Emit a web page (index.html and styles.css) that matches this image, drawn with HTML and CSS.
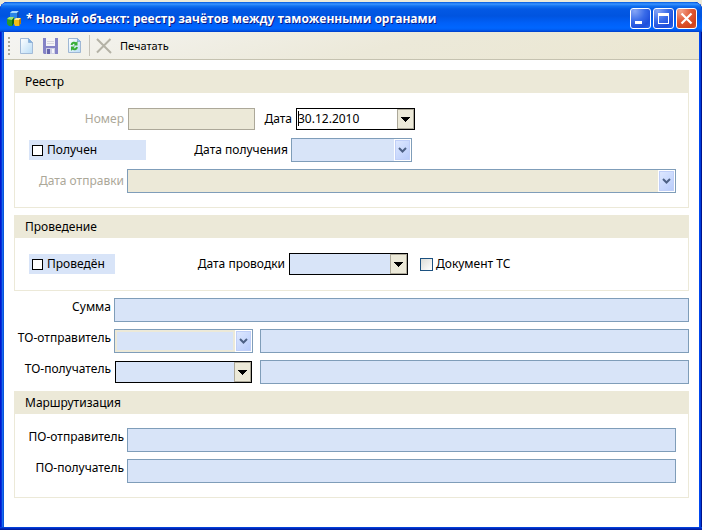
FILE: index.html
```html
<!DOCTYPE html>
<html lang="ru">
<head>
<meta charset="utf-8">
<meta name="viewport" content="width=device-width, initial-scale=1">
<title>Новый объект: реестр зачётов между таможенными органами</title>
<link rel="stylesheet" href="styles.css">
</head>
<body>
<svg class="defs" aria-hidden="true">
  <defs>
    <linearGradient id="page" x1="0" y1="0" x2="1" y2="1"><stop offset="0" stop-color="#fff"/><stop offset="1" stop-color="#b9dcf6"/></linearGradient>
    <symbol id="chevron" viewBox="0 0 9 6"><path d="M1 1 L4.500 4.500 L8 1" fill="none" stroke="#4d6185" stroke-width="2"/></symbol>
    <symbol id="triangle" viewBox="0 0 9 5"><path d="M0 0H9V1H8V2H7V3H6V4H5V5H4V4H3V3H2V2H1V1H0Z" fill="#000"/></symbol>
  </defs>
</svg>
<div class="window">
  <header class="titlebar">
    <svg class="app-icon" viewBox="0 0 15 16" aria-hidden="true">
      <path d="M3 2 L5 0H12V6L10 8H3Z" fill="#2b86e6"/><path d="M3 2 L5 0H12L10 2Z" fill="#a5d8fb"/><path d="M10 2L12 0V6L10 8Z" fill="#1550ae"/>
      <path d="M0 8 L2 6H7V12L5 15H2L0 13Z" fill="#2c9b25"/><path d="M0 8 L2 6H7L5 9Z" fill="#9be477"/><path d="M5 9L7 7V12L5 15Z" fill="#11651a"/>
      <path d="M7 9 L9 7H14V12L12 15H8L7 13Z" fill="#f3bd18"/><path d="M7 9 L9 7H14L12 9Z" fill="#fff093"/><path d="M12 9L14 7V12L12 15Z" fill="#b57a0a"/>
    </svg>
    <h1 class="title">* Новый объект: реестр зачётов между таможенными органами</h1>
    <button class="win-btn" type="button" aria-label="Свернуть"><svg viewBox="0 0 19 19"><rect x="4" y="12" width="7" height="3" fill="#fff"/></svg></button>
    <button class="win-btn" type="button" aria-label="Развернуть"><svg viewBox="0 0 19 19"><path d="M4 4H15V15H4ZM5 7V14H14V7Z" fill="#fff" fill-rule="evenodd"/></svg></button>
    <button class="win-btn close" type="button" aria-label="Закрыть"><svg viewBox="0 0 19 19"><path d="M4.500 4.500L14.500 14.500M14.500 4.500L4.500 14.500" stroke="#fff" stroke-width="2.200"/></svg></button>
  </header>
  <div class="toolbar">
    <span class="grip"></span>
    <button class="tool" type="button" aria-label="Создать"><svg viewBox="0 0 16 16"><path d="M2.500 .5H10.500L14.500 4.500V15.500H2.500Z" fill="url(#page)" stroke="#a3bbd8"/><path d="M10.500 .5V4.500H14.500Z" fill="#7fb2e3" stroke="#92b3d8"/></svg></button>
    <button class="tool" type="button" aria-label="Сохранить"><svg viewBox="0 0 16 16"><path d="M1 0H16V16H2L1 15Z" fill="#8583c6"/><rect x="4" y="0" width="9" height="8" fill="#f5f4f6"/><path d="M5 3.500H12M5 5.500H12" stroke="#d7d6de"/><rect x="4" y="10" width="9" height="6" fill="#cfd0e6"/><rect x="5" y="11" width="3" height="5" fill="#6666ad"/><rect x="10" y="11" width="2" height="4" fill="#f5f5fa"/></svg></button>
    <button class="tool" type="button" aria-label="Обновить"><svg viewBox="0 0 16 16"><path d="M2.500 .5H11.500L14.500 3.500V14.500H2.500Z" fill="url(#page)" stroke="#9fb7d4"/><path d="M11.500 .5V3.500H14.500Z" fill="#9bc2e8" stroke="#92b3d8"/><path d="M5.500 7C6 4.500 8.500 4 10 5.500M11 9C10.500 11.500 8 12 6.500 10.500" fill="none" stroke="#35ad35" stroke-width="2"/><path d="M11.500 3V7.500H7.500ZM5 13V8.500H9Z" fill="#35ad35"/></svg></button>
    <span class="separator"></span>
    <button class="tool" type="button" aria-label="Удалить" disabled><svg viewBox="0 0 16 16"><path d="M1 1L15 15M14.500 1L1 14.500" stroke="#b4b2a6" stroke-width="2"/></svg></button>
    <button class="tool-text" type="button">Печатать</button>
  </div>
  <main class="content">
    <section class="group">
      <h2 class="group-title">Реестр</h2>
      <div class="group-body">
        <div class="row">
          <label class="label disabled" for="number">Номер</label>
          <input class="field number" id="number" type="text" disabled>
          <label class="side-label near" for="date">Дата</label>
          <div class="combo date flat white">
            <input class="combo-value caret" id="date" type="text" value="30.12.2010">
            <button class="combo-btn" type="button" aria-label="Открыть календарь"><svg><use href="#triangle"/></svg></button>
          </div>
        </div>
        <div class="row">
          <label class="check received"><input type="checkbox">Получен</label>
          <label class="side-label received-label" for="received-date">Дата получения</label>
          <div class="combo date">
            <input class="combo-value" id="received-date" type="text">
            <button class="combo-btn" type="button" aria-label="Открыть календарь"><svg><use href="#chevron"/></svg></button>
          </div>
        </div>
        <div class="row">
          <label class="label disabled" for="sent-date">Дата отправки</label>
          <div class="combo grow off">
            <input class="combo-value" id="sent-date" type="text" disabled>
            <button class="combo-btn" type="button" aria-label="Открыть календарь"><svg><use href="#chevron"/></svg></button>
          </div>
        </div>
      </div>
    </section>
    <section class="group">
      <h2 class="group-title">Проведение</h2>
      <div class="group-body">
        <div class="row">
          <label class="check posted"><input type="checkbox">Проведён</label>
          <label class="side-label posted-label" for="posted-date">Дата проводки</label>
          <div class="combo date flat">
            <input class="combo-value" id="posted-date" type="text">
            <button class="combo-btn" type="button" aria-label="Открыть календарь"><svg><use href="#triangle"/></svg></button>
          </div>
          <label class="check plain"><input type="checkbox">Документ ТС</label>
        </div>
      </div>
    </section>
    <div class="row">
      <label class="label raised" for="sum">Сумма</label>
      <input class="field grow" id="sum" type="text">
    </div>
    <div class="row">
      <label class="label raised" for="to-sender">ТО-отправитель</label>
      <div class="combo office framed">
        <select class="combo-value" id="to-sender"><option></option></select>
        <span class="combo-btn"><svg><use href="#chevron"/></svg></span>
      </div>
      <input class="field grow name" type="text" aria-label="Наименование ТО-отправителя">
    </div>
    <div class="row">
      <label class="label raised" for="to-receiver">ТО-получатель</label>
      <div class="combo office flat">
        <select class="combo-value" id="to-receiver"><option></option></select>
        <span class="combo-btn"><svg><use href="#triangle"/></svg></span>
      </div>
      <input class="field grow name" type="text" aria-label="Наименование ТО-получателя">
    </div>
    <section class="group">
      <h2 class="group-title">Маршрутизация</h2>
      <div class="group-body">
        <div class="row">
          <label class="label raised" for="po-sender">ПО-отправитель</label>
          <input class="field grow" id="po-sender" type="text">
        </div>
        <div class="row">
          <label class="label raised" for="po-receiver">ПО-получатель</label>
          <input class="field grow" id="po-receiver" type="text">
        </div>
      </div>
    </section>
  </main>
</div>
</body>
</html>
```
FILE: styles.css
```css
:root {
  --beige: #ece9d8;
  --fill: #d8e4f8;
  --line: #7f9db9;
}

* {
  box-sizing: border-box;
}

body {
  margin: 0;
  padding-top: 2px;
  background: var(--beige);
  color: #000;
  font: 12px/18px "Noto Sans", "Open Sans", sans-serif;
}

button,
input,
select {
  margin: 0;
  padding: 0;
  border: 0;
  border-radius: 0;
  font: inherit;
  color: inherit;
}

svg {
  display: block;
}

.defs {
  position: absolute;
  width: 0;
  height: 0;
}

.window {
  display: flex;
  flex-direction: column;
  min-height: calc(100vh - 2px);
  padding: 0 3px 3px 4px;
  border-radius: 8px 8px 0 0;
  background: #0855dd;
  box-shadow:
    inset 0 -1px #001ea0,
    inset 0 -2px #0029bf,
    inset 0 -3px #0441d8,
    inset 1px 0 #0019cf,
    inset 2px 0 #0831d9,
    inset 3px 0 #166aee,
    inset -1px 0 #00138c,
    inset -2px 0 #003ddc,
    inset -3px 0 #0048f1;
}

.titlebar {
  display: flex;
  align-items: center;
  gap: 2px;
  height: 30px;
  margin: 0 -3px 0 -4px;
  padding: 3px 5px 0 7px;
  border-radius: 8px 8px 0 0;
  background: linear-gradient(#0058e0 0, #3b94ff 2px, #1272f0 4px, #0359e4 7px, #0054e0 14px, #0060f8 21px, #0066ff 26px, #005bf0 28px, #003dc8 30px);
}

.app-icon {
  width: 15px;
  height: 16px;
  margin-right: 2px;
}

.title {
  flex: 1;
  min-width: 0;
  margin: 0;
  overflow: hidden;
  color: #fff;
  font: bold 12px/20px "Open Sans", "Noto Sans", sans-serif;
  text-shadow: 1px 1px #0a1883;
  white-space: nowrap;
}

.win-btn {
  width: 21px;
  height: 21px;
  border: 1px solid #fff;
  border-radius: 3px;
  background: radial-gradient(circle at 20% 10%, #86a5f5 0, #396be8 45%, #1e4fdb 75%, #2966ed 100%);
}

.win-btn.close {
  background: radial-gradient(circle at 20% 10%, #f2a48c 0, #e25a36 45%, #d1421b 80%, #dc5b30 100%);
}

.toolbar {
  display: flex;
  align-items: center;
  height: 28px;
  padding: 0 4px;
  border-bottom: 1px solid #c5c2b0;
  background: linear-gradient(165deg, #f5f5f3, #ece9d9 55%, #ebe7d2);
}

.grip {
  width: 2px;
  height: 18px;
  margin-right: 8px;
  background: repeating-linear-gradient(#a9a798 0 2px, transparent 2px 4px);
}

.tool {
  width: 16px;
  margin-right: 8px;
  background: none;
}

.separator {
  width: 1px;
  height: 21px;
  margin: 0 6px 0 -1px;
  background: #c5c2b8;
}

.tool-text {
  background: none;
  font-size: 11px;
}

.content {
  display: flex;
  flex: 1;
  flex-direction: column;
  gap: 7px;
  padding: 10px;
  background: #fff;
}

.group {
  border: 1px solid var(--beige);
  border-top: 0;
}

.group-title {
  height: 23px;
  margin: 0;
  padding-left: 10px;
  background: var(--beige);
  font-size: 12px;
  font-weight: normal;
  line-height: 24px;
}

.group-body {
  display: flex;
  flex-direction: column;
  gap: 7px;
  padding: 14px 12px;
}

.row {
  display: flex;
  align-items: center;
  height: 24px;
}

.label {
  width: 100px;
  flex: none;
  padding-right: 3px;
  text-align: right;
  white-space: nowrap;
}

.label.raised {
  align-self: flex-start;
}

.disabled {
  color: #aca899;
}

.side-label {
  margin-right: 3px;
  text-align: right;
  white-space: nowrap;
}

.near {
  width: 36px;
}

.received-label {
  width: 142px;
}

.posted-label {
  width: 170px;
}

.field {
  min-width: 0;
  height: 24px;
  padding: 0 3px;
  border: 1px solid var(--line);
  background: var(--fill);
}

.number {
  width: 127px;
  height: 22px;
  margin: 0 1px;
  border-color: #aca899;
  background: var(--beige);
}

.grow {
  flex: 1;
}

.name {
  margin-left: 7px;
}

.combo {
  display: flex;
  position: relative;
  height: 24px;
  border: 1px solid var(--line);
  background: var(--fill);
}

.date {
  width: 121px;
}

.office {
  width: 139px;
}

.combo-value {
  flex: 1;
  min-width: 0;
  padding-left: 1px;
  appearance: none;
  background: none;
  outline: 0;
}

.caret {
  background: linear-gradient(#000, #000) 1px 2px / 1px 15px no-repeat;
}

.combo-btn {
  display: grid;
  place-items: center;
  flex: none;
  width: 17px;
  border: 1px solid #fff;
  background: linear-gradient(135deg, #dfe9ff, #b7cbfb);
  box-shadow: inset 0 0 0 1px #c0cff8;
  pointer-events: none;
}

.combo-btn svg {
  width: 9px;
  height: 6px;
}

.off {
  background: var(--beige);
}

.framed .combo-value {
  border: 2px solid var(--beige);
}

.flat {
  height: 22px;
  margin: 0 1px;
  border-color: #000;
}

.flat.date {
  width: 119px;
}

.flat.office {
  width: 137px;
}

.white {
  background: #fff;
}

.flat .combo-btn {
  border-color: #aca899;
  background: var(--beige);
  box-shadow: none;
}

.flat .combo-btn svg {
  height: 5px;
}

.check {
  display: flex;
  align-items: center;
  gap: 4px;
  height: 20px;
  margin-left: 2px;
  padding-left: 3px;
  background: var(--fill);
  white-space: nowrap;
}

.check input {
  width: 11px;
  height: 11px;
  appearance: none;
  border: 1px solid #000;
  background: #fff;
}

.received {
  width: 117px;
}

.posted {
  width: 86px;
}

.check.plain {
  gap: 3px;
  margin-left: 8px;
  background: none;
}

.plain input {
  width: 13px;
  height: 13px;
  border-color: #1c5180;
  background: linear-gradient(135deg, #dcdcd7, #fff);
}
```
